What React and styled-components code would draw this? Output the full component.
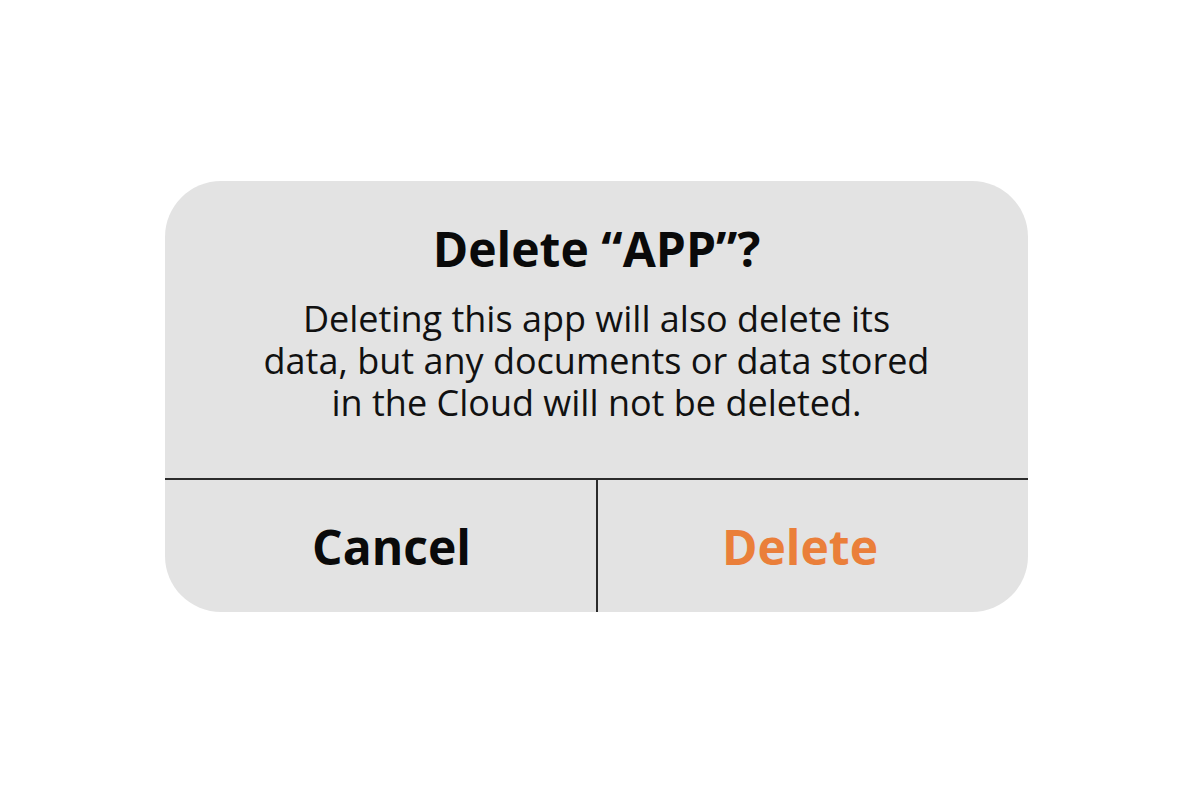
import React from 'react'
import styled, { createGlobalStyle } from 'styled-components'

const GlobalStyle = createGlobalStyle`
  html, body {
    margin: 0;
    padding: 0;
    background: #ffffff;
    font-family: "Open Sans", "Noto Sans", sans-serif;
  }
`

const Page = styled.div`
  width: 1200px;
  height: 800px;
  box-sizing: border-box;
  padding: 181px 0 0 165px;
`

const Dialog = styled.div`
  width: 863px;
  height: 431px;
  background: #e3e3e3;
  border-radius: 56px;
  overflow: hidden;
  display: flex;
  flex-direction: column;
`

const Content = styled.div`
  height: 297px;
  box-sizing: border-box;
  padding-top: 40px;
  display: flex;
  flex-direction: column;
  align-items: center;
  text-align: center;
  color: #111;
`

const Title = styled.h1`
  margin: 0;
  font-size: 48px;
  font-weight: 700;
  line-height: 56px;
  color: #0a0a0a;
`

const Message = styled.p`
  margin: 21px 0 0;
  font-size: 36px;
  font-weight: 400;
  line-height: 42px;
  color: #111;
`

const Actions = styled.div`
  flex: 1;
  display: grid;
  grid-template-columns: 431px 1fr;
  border-top: 2px solid #2b2b2b;
`

const ActionButton = styled.button`
  border: none;
  background: transparent;
  font-family: inherit;
  font-size: 48px;
  font-weight: 700;
  line-height: normal;
  color: ${props => props.danger ? '#ea7f3a' : '#0a0a0a'};
  border-left: ${props => props.divided ? '2px solid #2b2b2b' : 'none'};
  padding: ${props => props.danger ? '0 26px 0 0' : '0 0 0 22px'};
  cursor: pointer;
`

class App extends React.Component {
  render() {
    return (
      <Page>
        <GlobalStyle />
        <Dialog>
          <Content>
            <Title>Delete “APP”?</Title>
            <Message>
              Deleting this app will also delete its<br />
              data, but any documents or data stored<br />
              in the Cloud will not be deleted.
            </Message>
          </Content>
          <Actions>
            <ActionButton>Cancel</ActionButton>
            <ActionButton danger divided>Delete</ActionButton>
          </Actions>
        </Dialog>
      </Page>
    )
  }
}

export default App
